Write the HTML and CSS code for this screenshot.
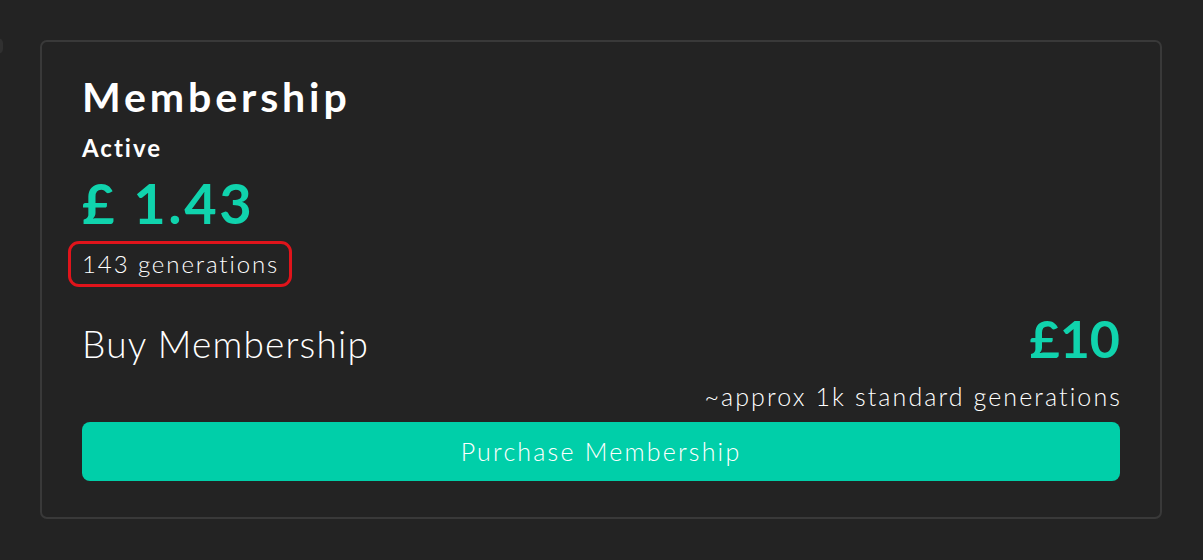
FILE: index.html
```html
<!DOCTYPE html>
<html>
<head>
<meta charset="utf-8">
<link rel="stylesheet" href="styles.css">
</head>
<body>
<div class="page">
  <span class="edge-handle"></span>
  <section class="card">
    <h1 class="title">Membership</h1>
    <div class="status">Active</div>
    <div class="balance">£ 1.43</div>
    <div class="gens"><span class="gens-box">143 generations</span></div>
    <div class="buy-row">
      <div class="buy-label">Buy Membership</div>
      <div class="buy-price">£10</div>
    </div>
    <div class="approx">~approx 1k standard generations</div>
    <button class="purchase">Purchase Membership</button>
  </section>
</div>
</body>
</html>
```
FILE: styles.css
```css
html, body {
  margin: 0;
  padding: 0;
  background: #232323;
}
body {
  font-family: "Lato", "Liberation Sans", sans-serif;
  color: #ffffff;
  width: 1203px;
  height: 560px;
  overflow: hidden;
}
.page {
  position: relative;
  padding: 40px 41px 40px 40px;
}
.edge-handle {
  position: absolute;
  left: -20px;
  top: 38px;
  width: 23px;
  height: 16px;
  border-radius: 5px;
  background: #303030;
}
.card {
  border: 2px solid #393939;
  border-radius: 7px;
  padding: 31px 40px 36px 40px;
  display: flex;
  flex-direction: column;
  height: 479px;
  box-sizing: border-box;
}
.title {
  margin: 0;
  font-size: 41px;
  font-weight: 700;
  line-height: 48px;
  letter-spacing: 3.9px;
}
.status {
  font-size: 24px;
  font-weight: 700;
  line-height: 30px;
  margin-top: 12px;
  letter-spacing: 2px;
}
.balance {
  font-size: 56px;
  font-weight: 700;
  color: #10d3ad;
  line-height: 60px;
  margin-top: 10px;
  letter-spacing: 2.6px;
}
.gens {
  margin-top: 8px;
  display: flex;
}
.gens-box {
  font-size: 24px;
  font-weight: 300;
  line-height: 38px;
  padding: 1px 10px 1px 11px;
  margin-left: -14px;
  border: 3px solid #e0141b;
  border-radius: 11px;
  letter-spacing: 1.9px;
}
.buy-row {
  display: flex;
  justify-content: space-between;
  align-items: flex-end;
  margin-top: 23px;
}
.buy-label {
  font-size: 37px;
  font-weight: 300;
  line-height: 44px;
  letter-spacing: 1.2px;
}
.buy-price {
  font-size: 52px;
  font-weight: 700;
  color: #10d3ad;
  line-height: 56px;
}
.approx {
  align-self: flex-end;
  font-size: 25px;
  font-weight: 300;
  line-height: 32px;
  margin-top: 14px;
  letter-spacing: 2.1px;
  margin-right: -2px;
}
.purchase {
  margin-top: 10px;
  height: 60px;
  border: none;
  border-radius: 8px;
  background: #00cfa9;
  color: #ffffff;
  font-family: inherit;
  font-size: 25px;
  font-weight: 300;
  letter-spacing: 2.2px;
  padding-bottom: 3px;
}
```
